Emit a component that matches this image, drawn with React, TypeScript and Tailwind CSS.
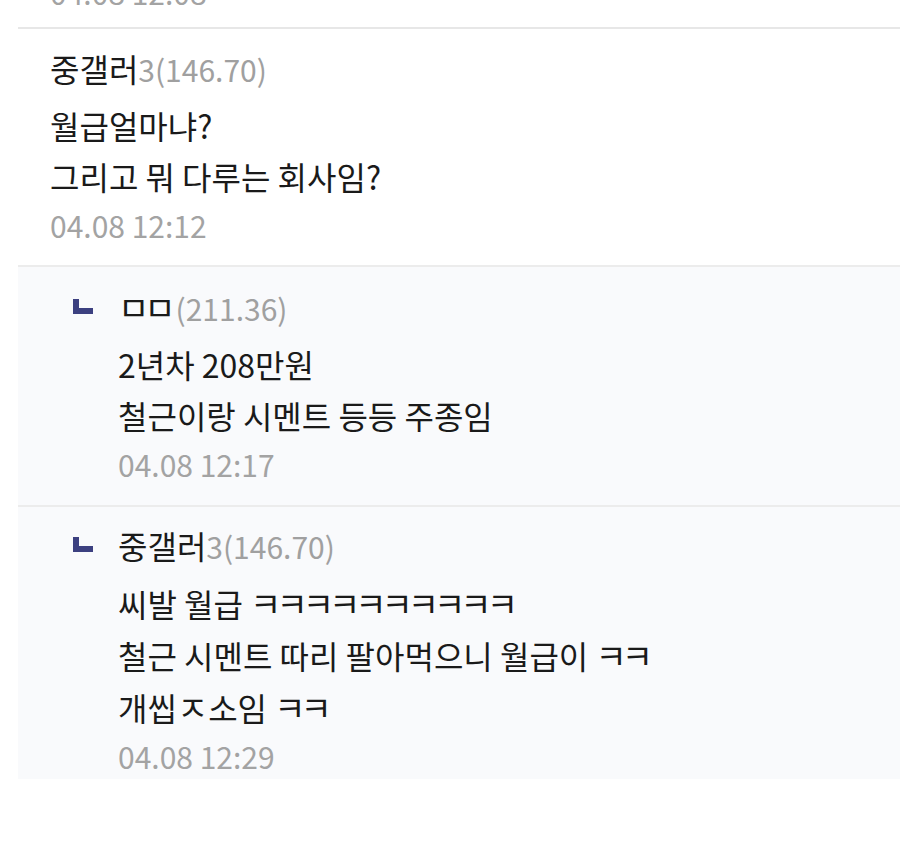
import { Fragment } from "react";

const font = {
  fontFamily: '"Noto Sans CJK KR", "Noto Sans", sans-serif',
};

type Comment = {
  name: string;
  ip: string;
  lines: string[];
  date: string;
};

const first: Comment = {
  name: "중갤러",
  ip: "3(146.70)",
  lines: ["월급얼마냐?", "그리고 뭐 다루는 회사임?"],
  date: "04.08 12:12",
};

const replies: Comment[] = [
  {
    name: "ㅁㅁ",
    ip: "(211.36)",
    lines: ["2년차 208만원", "철근이랑 시멘트 등등 주종임"],
    date: "04.08 12:17",
  },
  {
    name: "중갤러",
    ip: "3(146.70)",
    lines: [
      "씨발 월급 ㅋㅋㅋㅋㅋㅋㅋㅋㅋㅋ",
      "철근 시멘트 따리 팔아먹으니 월급이 ㅋㅋ",
      "개씹ㅈ소임 ㅋㅋ",
    ],
    date: "04.08 12:29",
  },
];

// jamo (ㅋ, ㅁ, ㅈ) are drawn bigger and tighter in the screenshot
function Text({ s }: { s: string }) {
  const parts = s.split(/([ㄱ-ㅎ]+)/);

  return (
    <>
      {parts.map((p, i) =>
        /^[ㄱ-ㅎ]+$/.test(p) ? (
          <span key={i} className="text-[34px] tracking-[-5px] mr-[5px]">
            {p}
          </span>
        ) : (
          <Fragment key={i}>{p}</Fragment>
        )
      )}
    </>
  );
}

function ReplyMark() {
  return (
    <svg width="20" height="15" viewBox="0 0 20 15" className="mt-[18px]">
      <path d="M3 0 V12 H20" fill="none" stroke="#3c4080" strokeWidth="6" />
    </svg>
  );
}

function Body({ c }: { c: Comment }) {
  return (
    <div className="flex flex-col">
      <div className="h-[52px] leading-[52px] mb-[6px]">
        <span className="text-[#1a1a1a]">
          <Text s={c.name} />
        </span>
        <span className="text-[#a0a0a0] text-[30px]">{c.ip}</span>
      </div>

      {c.lines.map((l, i) => (
        <div key={i} className="leading-[51px] text-[#1a1a1a]">
          <Text s={l} />
        </div>
      ))}

      <div className="leading-[46px] text-[#a3a3a3] text-[30px]">
        {c.date}
      </div>
    </div>
  );
}

export default function App() {
  return (
    <main
      style={font}
      className="w-[900px] h-[859px] bg-white overflow-hidden text-[32px]"
    >

      <div className="ml-[18px]">

        {/* cut-off previous comment */}

        <div className="h-[27px] overflow-hidden pl-[32px]">
          <div className="mt-[-31px] leading-[46px] text-[#a3a3a3] text-[30px]">
            04.08 12:08
          </div>
        </div>

        {/* comment */}

        <div className="border-t-2 border-[#e7e7e7] pl-[32px] pt-[13px] pb-[17px]">
          <Body c={first} />
        </div>

        {/* replies */}

        {replies.map((r, i) => (
          <div
            key={i}
            className={
              i === 0
                ? "bg-[#f9fafc] border-t-2 border-[#ececec] flex pl-[55px] pt-[14px] pb-[18px]"
                : "bg-[#f9fafc] border-t-2 border-[#ececec] flex pl-[55px] pt-[12px]"
            }
          >
            <div className="w-[45px] shrink-0">
              <ReplyMark />
            </div>
            <Body c={r} />
          </div>
        ))}

      </div>

    </main>
  );
}
